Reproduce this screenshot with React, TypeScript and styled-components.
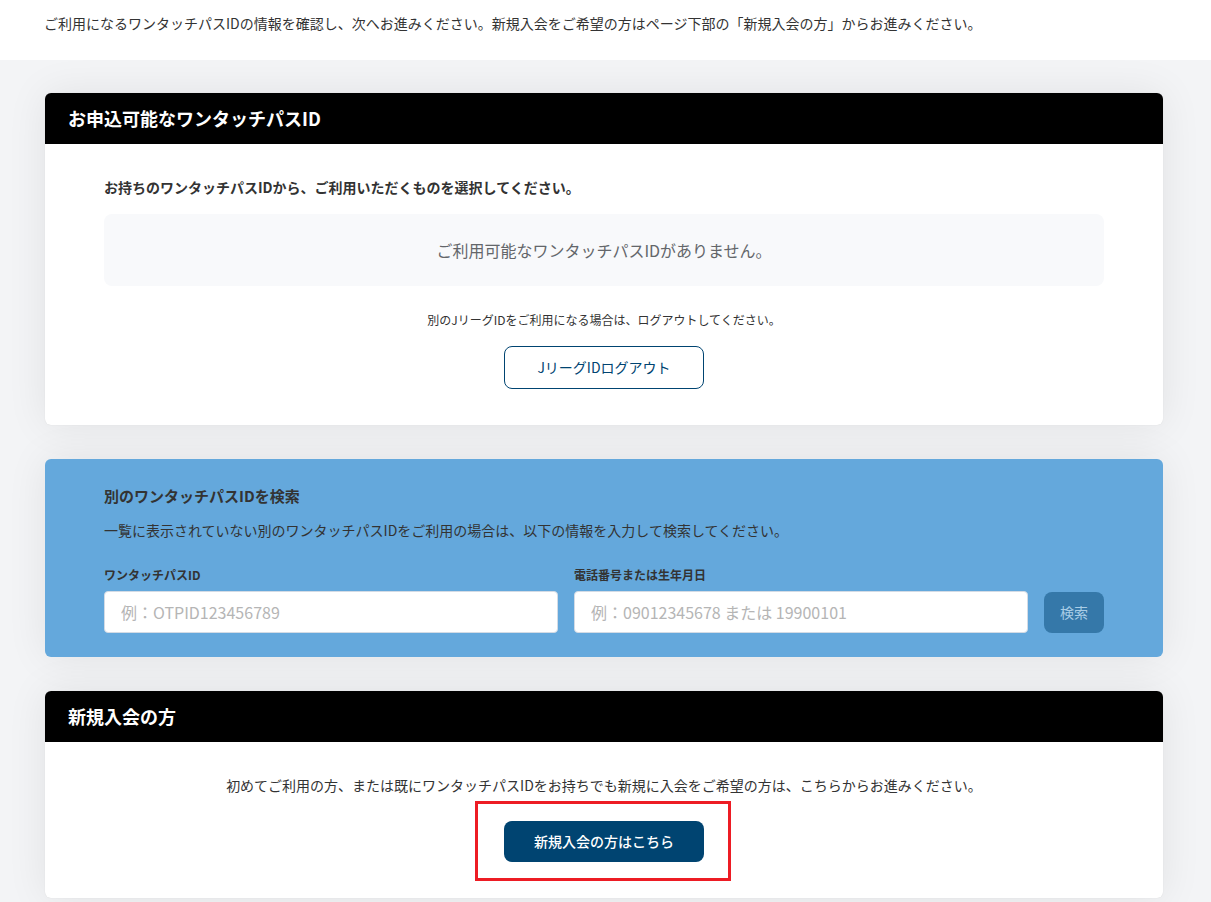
import { ReactElement } from 'react';
import styled, { createGlobalStyle } from 'styled-components';

const GlobalStyle = createGlobalStyle`
  html, body {
    margin: 0;
    padding: 0;
    background: #f3f4f6;
    color: #333;
    font-family: "Noto Sans CJK JP", "Noto Sans", sans-serif;
  }
  * {
    box-sizing: border-box;
  }
`;

const Page = styled.div`
  width: 1211px;
  height: 902px;
  overflow: hidden;
`;

const Intro = styled.div`
  position: relative;
  z-index: 1;
  height: 60px;
  background: #fff;
  padding: 13px 44px 0;
  font-size: 14px;
  line-height: 20px;
  color: #333;
`;

const Main = styled.main`
  display: flex;
  flex-direction: column;
  gap: 34px;
  padding: 33px 48px 0 45px;
`;

const Card = styled.section`
  background: #fff;
  border-radius: 6px;
  overflow: hidden;
  box-shadow: 0 0 40px rgba(0, 0, 0, 0.08), 0 0 1px rgba(0, 0, 0, 0.14);
`;

const CardHeader = styled.h2`
  margin: 0;
  height: 51px;
  background: #000;
  color: #fff;
  padding: 0 23px;
  font-size: 18px;
  font-weight: 700;
  line-height: 50px;
`;

const SelectBody = styled.div`
  height: 281px;
  padding: 33px 59px 0;
`;

const Lead = styled.p`
  margin: 0 0 17px;
  font-size: 14px;
  font-weight: 700;
  line-height: 20px;
`;

const EmptyBox = styled.div`
  height: 72px;
  background: #f8f9fb;
  border-radius: 8px;
  display: flex;
  justify-content: center;
  align-items: center;
  font-size: 16px;
  color: #63666a;
`;

const Note = styled.p`
  margin: 25px 0 17px;
  text-align: center;
  font-size: 12px;
  line-height: 18px;
  color: #333;
`;

const ButtonRow = styled.div`
  display: flex;
  justify-content: center;
`;

const OutlineButton = styled.button`
  width: 200px;
  height: 43px;
  padding: 0 0 2px;
  background: #fff;
  border: 1px solid #004471;
  border-radius: 8px;
  color: #004471;
  font: 400 14px "Noto Sans CJK JP", sans-serif;
`;

const SearchCard = styled.section`
  height: 198px;
  background: #64a8dc;
  border-radius: 6px;
  padding: 25px 59px 0;
  box-shadow: 0 0 40px rgba(0, 0, 0, 0.08);
`;

const SearchTitle = styled.h3`
  margin: 0;
  font-size: 15px;
  font-weight: 700;
  line-height: 24px;
  color: #333;
`;

const SearchText = styled.p`
  margin: 12px 0 0;
  font-size: 14px;
  line-height: 20px;
  color: #333;
`;

const SearchForm = styled.div`
  display: flex;
  align-items: flex-end;
  gap: 16px;
  margin-top: 27px;
`;

const Field = styled.label`
  width: 454px;
  display: flex;
  flex-direction: column;
  gap: 8px;
  font-size: 12px;
  font-weight: 700;
  line-height: 16px;
  color: #333;
`;

const TextInput = styled.input`
  height: 42px;
  padding: 0 16px;
  background: #fff;
  border: 1px solid #d3dbe5;
  border-radius: 4px;
  font: 400 16px "Noto Sans CJK JP", sans-serif;

  &::placeholder {
    color: #b5b5b5;
    opacity: 1;
  }
`;

const SearchButton = styled.button`
  width: 60px;
  height: 41px;
  padding: 0 0 2px;
  background: #3578a9;
  border: 0;
  border-radius: 8px;
  color: #a9cde6;
  font: 400 14px "Noto Sans CJK JP", sans-serif;
`;

const JoinBody = styled.div`
  height: 156px;
  padding: 33px 0 0;
  text-align: center;
`;

const JoinText = styled.p`
  margin: 0 0 26px;
  font-size: 14px;
  line-height: 20px;
  color: #333;
`;

const Highlighted = styled.div`
  position: relative;
  width: 200px;
  margin: 0 auto;
`;

const RedFrame = styled.span`
  position: absolute;
  left: -29px;
  right: -27px;
  top: -20px;
  bottom: -19px;
  border: 3px solid #ed1c24;
  pointer-events: none;
`;

const PrimaryButton = styled.button`
  display: block;
  width: 200px;
  height: 41px;
  padding: 0 0 2px;
  background: #004471;
  border: 0;
  border-radius: 8px;
  color: #fff;
  font: 500 14px "Noto Sans CJK JP", sans-serif;
`;

const App = (): ReactElement => {
  return (
    <Page>
      <GlobalStyle />
      <Intro>
        ご利用になるワンタッチパスIDの情報を確認し、次へお進みください。新規入会をご希望の方はページ下部の「新規入会の方」からお進みください。
      </Intro>

      <Main>
        <Card>
          <CardHeader>お申込可能なワンタッチパスID</CardHeader>
          <SelectBody>
            <Lead>お持ちのワンタッチパスIDから、ご利用いただくものを選択してください。</Lead>
            <EmptyBox>ご利用可能なワンタッチパスIDがありません。</EmptyBox>
            <Note>別のJリーグIDをご利用になる場合は、ログアウトしてください。</Note>
            <ButtonRow>
              <OutlineButton>JリーグIDログアウト</OutlineButton>
            </ButtonRow>
          </SelectBody>
        </Card>

        <SearchCard>
          <SearchTitle>別のワンタッチパスIDを検索</SearchTitle>
          <SearchText>一覧に表示されていない別のワンタッチパスIDをご利用の場合は、以下の情報を入力して検索してください。</SearchText>
          <SearchForm>
            <Field>
              ワンタッチパスID
              <TextInput placeholder="例：OTPID123456789" />
            </Field>
            <Field>
              電話番号または生年月日
              <TextInput placeholder="例：09012345678 または 19900101" />
            </Field>
            <SearchButton>検索</SearchButton>
          </SearchForm>
        </SearchCard>

        <Card>
          <CardHeader>新規入会の方</CardHeader>
          <JoinBody>
            <JoinText>初めてご利用の方、または既にワンタッチパスIDをお持ちでも新規に入会をご希望の方は、こちらからお進みください。</JoinText>
            <Highlighted>
              <PrimaryButton>新規入会の方はこちら</PrimaryButton>
              <RedFrame />
            </Highlighted>
          </JoinBody>
        </Card>
      </Main>
    </Page>
  );
};

export default App;
